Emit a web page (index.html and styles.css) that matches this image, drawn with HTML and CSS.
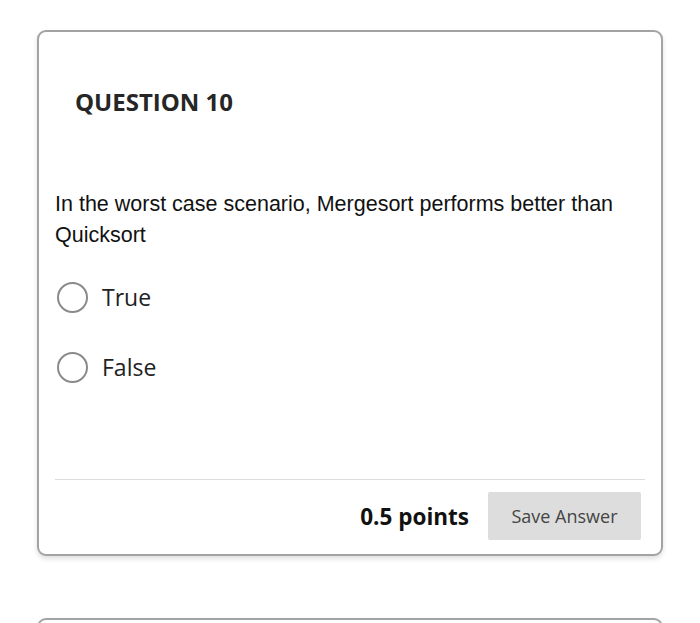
FILE: index.html
```html
<!DOCTYPE html>
<html lang="en">
<head>
  <meta charset="UTF-8">
  <meta name="viewport" content="width=device-width, initial-scale=1.0">
  <title>Question 10</title>
  <link rel="stylesheet" href="styles.css">
</head>

<body>
  <div class="question-card">
    <h2 class="question-title">QUESTION 10</h2>

    <p class="question-text">In the worst case scenario, Mergesort performs better than Quicksort</p>

    <div class="answers">
      <label class="answer">
        <span class="radio"></span>
        <span class="answer-label">True</span>
      </label>
      <label class="answer">
        <span class="radio"></span>
        <span class="answer-label">False</span>
      </label>
    </div>

    <div class="card-footer">
      <span class="points">0.5 points</span>
      <button class="save-btn">Save Answer</button>
    </div>
  </div>

  <div class="question-card next-card"></div>
</body>
</html>
```

FILE: styles.css
```css
body {
  margin: 0;
  padding-top: 30px;
  background-color: #fff;
  font-family: "Open Sans", sans-serif;
  color: #222;
}

.question-card {
  width: 626px;
  margin-left: 37px;
  box-sizing: border-box;
  padding: 0 16px 14px 16px;
  border: 2px solid #a3a3a3;
  border-radius: 9px;
  box-shadow: 0 3px 5px rgba(0, 0, 0, 0.12);
  background-color: #fff;
}

.question-title {
  margin: 0;
  padding: 54px 0 0 20px;
  font-size: 24px;
  line-height: 32px;
  font-weight: 700;
  color: #262626;
}

.question-text {
  margin: 71px 0 0 0;
  font-family: "Liberation Sans", Arial, sans-serif;
  font-size: 21.5px;
  line-height: 31px;
  color: #111;
}

.answers {
  margin-top: 30px;
  display: flex;
  flex-direction: column;
  gap: 38px;
}

.answer {
  display: flex;
  align-items: center;
  gap: 14px;
  height: 32px;
  padding-left: 2px;
}

.radio {
  width: 27px;
  height: 27px;
  border: 2.5px solid #8a8a8a;
  border-radius: 50%;
  flex-shrink: 0;
}

.answer-label {
  font-size: 23px;
  color: #222;
}

.card-footer {
  margin-top: 96px;
  padding-top: 12px;
  border-top: 1px solid #dcdcdc;
  display: flex;
  justify-content: flex-end;
  align-items: center;
  gap: 19px;
  padding-right: 4px;
}

.points {
  font-size: 22.5px;
  font-weight: 700;
  color: #111;
}

.save-btn {
  width: 153px;
  height: 48px;
  border: none;
  border-radius: 2px;
  background-color: #dddddd;
  font-family: "Open Sans", sans-serif;
  font-size: 18px;
  color: #444;
}

.next-card {
  margin-top: 62px;
  height: 60px;
  padding: 0;
}
```
